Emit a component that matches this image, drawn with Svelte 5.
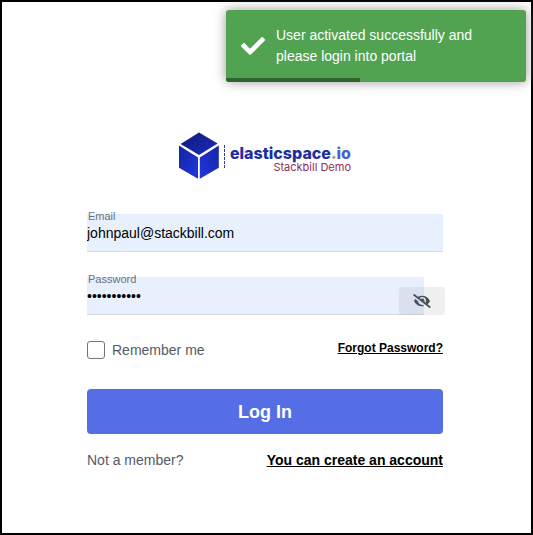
<script>
  let email = $state('johnpaul@stackbill.com');
  let password = $state('stackbill12');
  let remember = $state(false);
  let visible = $state(false);
  const progress = 134 / 3;
</script>

<div class="page">
  <div class="toast" role="status">
    <svg class="check" viewBox="0 0 512 384" aria-hidden="true">
      <path d="M173.900 375.400l-166.400-166.400c-10-10-10-26.200 0-36.200l36.200-36.200c10-10 26.200-10 36.200 0L192 248.700 432.100 8.600c10-10 26.200-10 36.200 0l36.200 36.200c10 10 10 26.200 0 36.200l-294.400 294.400c-10 10-26.200 10-36.200 0z" fill="#fff" />
    </svg>
    <p>User activated successfully and please login into portal</p>
    <span class="progress" style="width: {progress}%"></span>
  </div>

  <main>
    <div class="logo">
      <svg class="cube" viewBox="0 0 46 48" aria-hidden="true">
        <defs>
          <linearGradient id="top" x1="0" y1="0" x2="1" y2="1">
            <stop offset="0" stop-color="#0d1a78" />
            <stop offset="1" stop-color="#1c2cc0" />
          </linearGradient>
          <linearGradient id="left" x1="0" y1="0" x2="1" y2="1">
            <stop offset="0" stop-color="#1424a0" />
            <stop offset="1" stop-color="#1f38e0" />
          </linearGradient>
          <linearGradient id="right" x1="0" y1="1" x2="1" y2="0">
            <stop offset="0" stop-color="#2036e0" />
            <stop offset="1" stop-color="#1624a4" />
          </linearGradient>
        </defs>
        <path d="M20 .4 38.600 11.600 20 23 1.600 11.900Z" fill="url(#top)" />
        <path d="M0 13.600 19 25.400V46.800L0 35.800Z" fill="url(#left)" />
        <path d="M39.800 13.600V35.800L20.800 46.800V25.400Z" fill="url(#right)" />
        <path d="M45.500 13V36" stroke="#2c3ca8" stroke-width="1" stroke-dasharray="3 1" />
      </svg>
      <div class="wordmark">
        <strong>elasticspace<span class="dot">.</span><span class="io">io</span></strong>
        <span class="sub">Stackbill Demo</span>
      </div>
    </div>

    <form onsubmit={(e) => e.preventDefault()}>
      <div class="field">
        <label for="email">Email</label>
        <input id="email" type="email" bind:value={email} />
      </div>

      <div class="field secret">
        <label for="password">Password</label>
        <input id="password" type={visible ? 'text' : 'password'} bind:value={password} />
        <button class="eye" type="button" aria-label="Show password" onclick={() => (visible = !visible)}>
          <svg viewBox="0 0 640 512" aria-hidden="true">
            <path d="M320 400c-75.850 0-137.250-58.710-142.900-133.110L72.200 185.820c-13.790 17.300-26.480 35.590-36.720 55.590a32.350 32.350 0 0 0 0 29.190C89.710 376.410 197.070 448 320 448c26.910 0 52.870-4 77.890-10.460L346 397.390a144.130 144.130 0 0 1-26 2.610zm313.820 58.100l-110.550-85.440a331.250 331.250 0 0 0 81.250-102.070 32.350 32.350 0 0 0 0-29.190C550.290 135.590 442.930 64 320 64a308.150 308.150 0 0 0-147.320 37.700L45.460 3.370A16 16 0 0 0 23 6.180L3.370 31.450A16 16 0 0 0 6.180 53.900l588.360 454.730a16 16 0 0 0 22.460-2.810l19.640-25.270a16 16 0 0 0-2.820-22.450zm-183.720-142l-39.300-30.380A94.750 94.750 0 0 0 416 256a94.760 94.760 0 0 0-121.310-92.210A47.650 47.650 0 0 1 304 192a46.640 46.640 0 0 1-1.540 10l-73.610-56.890A142.310 142.310 0 0 1 320 112a143.920 143.920 0 0 1 144 144c0 21.630-5.290 41.790-13.900 60.110z" fill="#495057" />
          </svg>
        </button>
      </div>

      <div class="row options">
        <label class="remember"><input type="checkbox" bind:checked={remember} />Remember me</label>
        <a class="forgot" href="#forgot">Forgot Password?</a>
      </div>

      <button class="login" type="submit">Log In</button>

      <div class="row signup">
        <span>Not a member?</span>
        <a href="#register">You can create an account</a>
      </div>
    </form>
  </main>
</div>

<style>
  .page {
    box-sizing: border-box;
    min-height: 100vh;
    border: 2px solid #000;
    background: #fff;
    color: #555b62;
    font: 14px/20px "Liberation Sans", Arial, sans-serif;
  }
  .toast {
    position: absolute;
    top: 10px;
    right: 7px;
    box-sizing: border-box;
    display: flex;
    align-items: center;
    gap: 11px;
    width: 300px;
    padding: 15px;
    border-radius: 3px;
    background: #51a351;
    box-shadow: 0 0 12px #999;
    color: #fff;
    line-height: 21px;
  }
  .toast p { margin: 0; }
  .check { flex: none; width: 24px; height: 18px; }
  .progress {
    position: absolute;
    left: 0;
    bottom: 0;
    height: 4px;
    border-bottom-left-radius: 3px;
    background: #316231;
  }
  main { padding: 130px 88px 0 85px; }
  .logo {
    display: flex;
    align-items: center;
    justify-content: center;
    gap: 5px;
  }
  .cube { flex: none; width: 46px; height: 48px; }
  .wordmark {
    display: flex;
    flex-direction: column;
    align-items: flex-end;
    padding-top: 6px;
    font-family: Inter, sans-serif;
  }
  .wordmark strong { color: #202e9e; font-size: 16px; font-weight: 800; line-height: 16px; }
  .dot { color: #a09a78; }
  .io { color: #4a5fd8; }
  .sub { color: #8d2c65; font-size: 11px; line-height: 12px; }
  form { margin-top: 34px; }
  .field {
    position: relative;
    margin-bottom: 25px;
  }
  .field label {
    position: absolute;
    top: -4px;
    left: 1px;
    color: #6b7078;
    font-size: 11px;
    line-height: 12px;
  }
  .field input {
    display: block;
    box-sizing: border-box;
    width: 100%;
    height: 38px;
    padding: 2px 0;
    border: 0;
    border-bottom: 1px solid #d5dbe3;
    border-radius: 0;
    outline: 0;
    background: #e8f0fe;
    color: #000;
    font: inherit;
  }
  .secret { padding-right: 19px; }
  .eye {
    position: absolute;
    right: -2px;
    bottom: 0;
    display: flex;
    align-items: center;
    justify-content: center;
    width: 46px;
    height: 28px;
    padding: 0;
    border: 0;
    border-radius: 3px;
    background: rgb(0 0 0 / 6%);
  }
  .eye svg { width: 18px; height: 14px; }
  .row {
    display: flex;
    justify-content: space-between;
  }
  .remember {
    display: flex;
    align-items: center;
    gap: 7px;
  }
  .remember input {
    appearance: none;
    width: 18px;
    height: 18px;
    margin: 0;
    border: 1px solid #767676;
    border-radius: 3px;
    background: #fff;
  }
  .remember input:checked { background: #556ee6; }
  a {
    color: #000;
    font-weight: 700;
    text-decoration: underline;
  }
  .forgot { font-size: 12px; line-height: 16px; }
  .login {
    display: block;
    width: 100%;
    height: 45px;
    margin: 29px 0 16px;
    padding: 0;
    border: 0;
    border-radius: 4px;
    background: #556ee6;
    color: #fff;
    font: 700 18px/24px "Liberation Sans", Arial, sans-serif;
  }
</style>
